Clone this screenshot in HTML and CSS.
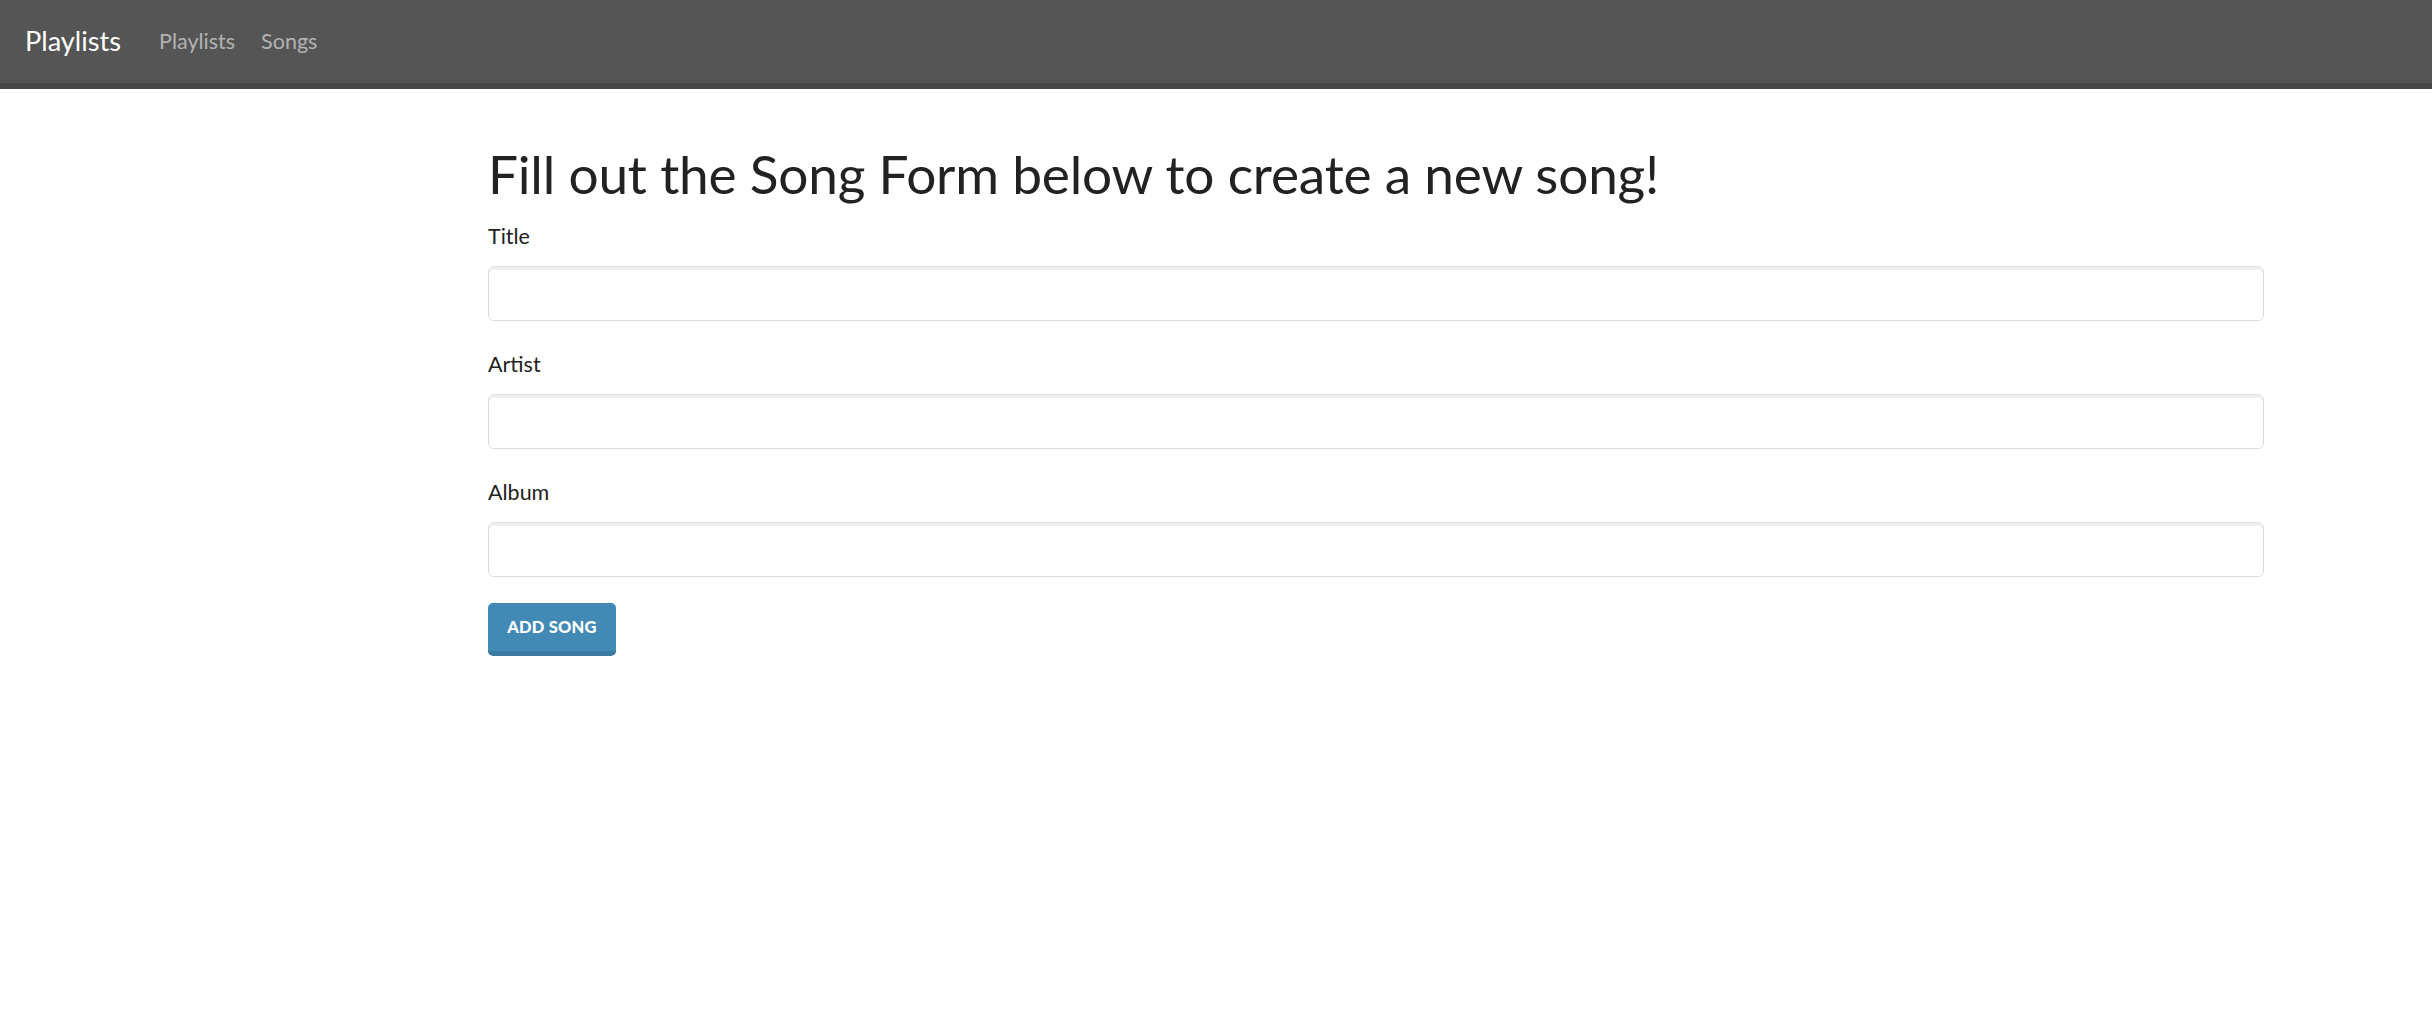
FILE: index.html
```html
<!DOCTYPE html>
<html>
<head>
<meta charset="utf-8">
<title>Playlists</title>
<link rel="stylesheet" href="styles.css">
</head>
<body>
<nav class="navbar">
  <a class="brand" href="#">Playlists</a>
  <ul class="nav-links">
    <li><a href="#">Playlists</a></li>
    <li><a href="#">Songs</a></li>
  </ul>
</nav>
<main class="content">
  <h1 class="page-title">Fill out the Song Form below to create a new song!</h1>
  <form class="song-form">
    <div class="form-group">
      <label class="form-label" for="title">Title</label>
      <input class="form-input" id="title" type="text">
    </div>
    <div class="form-group">
      <label class="form-label" for="artist">Artist</label>
      <input class="form-input" id="artist" type="text">
    </div>
    <div class="form-group">
      <label class="form-label" for="album">Album</label>
      <input class="form-input" id="album" type="text">
    </div>
    <button class="btn-primary" type="button">Add Song</button>
  </form>
</main>
</body>
</html>
```
FILE: styles.css
```css
* { box-sizing: border-box; }
html, body { margin: 0; padding: 0; }
body {
  font-family: Lato, "Open Sans", sans-serif;
  color: #222;
  background: #fff;
  font-size: 22px;
}
.navbar {
  display: flex;
  align-items: center;
  height: 89px;
  background: #555;
  border-bottom: 6px solid #474747;
  padding: 0 0 2px 25px;
}
.brand {
  color: #fff;
  text-decoration: none;
  font-size: 27.2px;
  margin-right: 38px;
}
.nav-links {
  list-style: none;
  display: flex;
  gap: 26px;
  margin: 0;
  padding: 0;
}
.nav-links a {
  color: #b3b3b3;
  text-decoration: none;
  font-size: 21.5px;
}
.content {
  margin-left: 488px;
  width: 1776px;
  padding-top: 48px;
}
.page-title {
  font-weight: 400;
  font-size: 53.2px;
  line-height: 72px;
  margin: 0 0 11px;
  color: #222;
  letter-spacing: -0.2px;
}
.form-group {
  margin-bottom: 27px;
}
.form-label {
  display: block;
  font-size: 21.5px;
  line-height: 32px;
  margin-bottom: 14px;
  color: #222;
}
.form-input {
  display: block;
  width: 100%;
  height: 55px;
  border: 1px solid #dcdcdc;
  border-radius: 6px;
  box-shadow: inset 0 3px 0 rgba(0, 0, 0, 0.06);
  background: #fff;
  padding: 0 19px;
  font-size: 22px;
  font-family: inherit;
}
.btn-primary {
  display: block;
  width: 128px;
  height: 53px;
  margin-top: -1px;
  background: #428ab5;
  border: 0;
  border-bottom: 5px solid #3a7aa1;
  border-radius: 5px;
  color: #fff;
  font-family: inherit;
  font-weight: 900;
  font-size: 16.5px;
  text-transform: uppercase;
  letter-spacing: 0.2px;
  padding: 0;
}
```
